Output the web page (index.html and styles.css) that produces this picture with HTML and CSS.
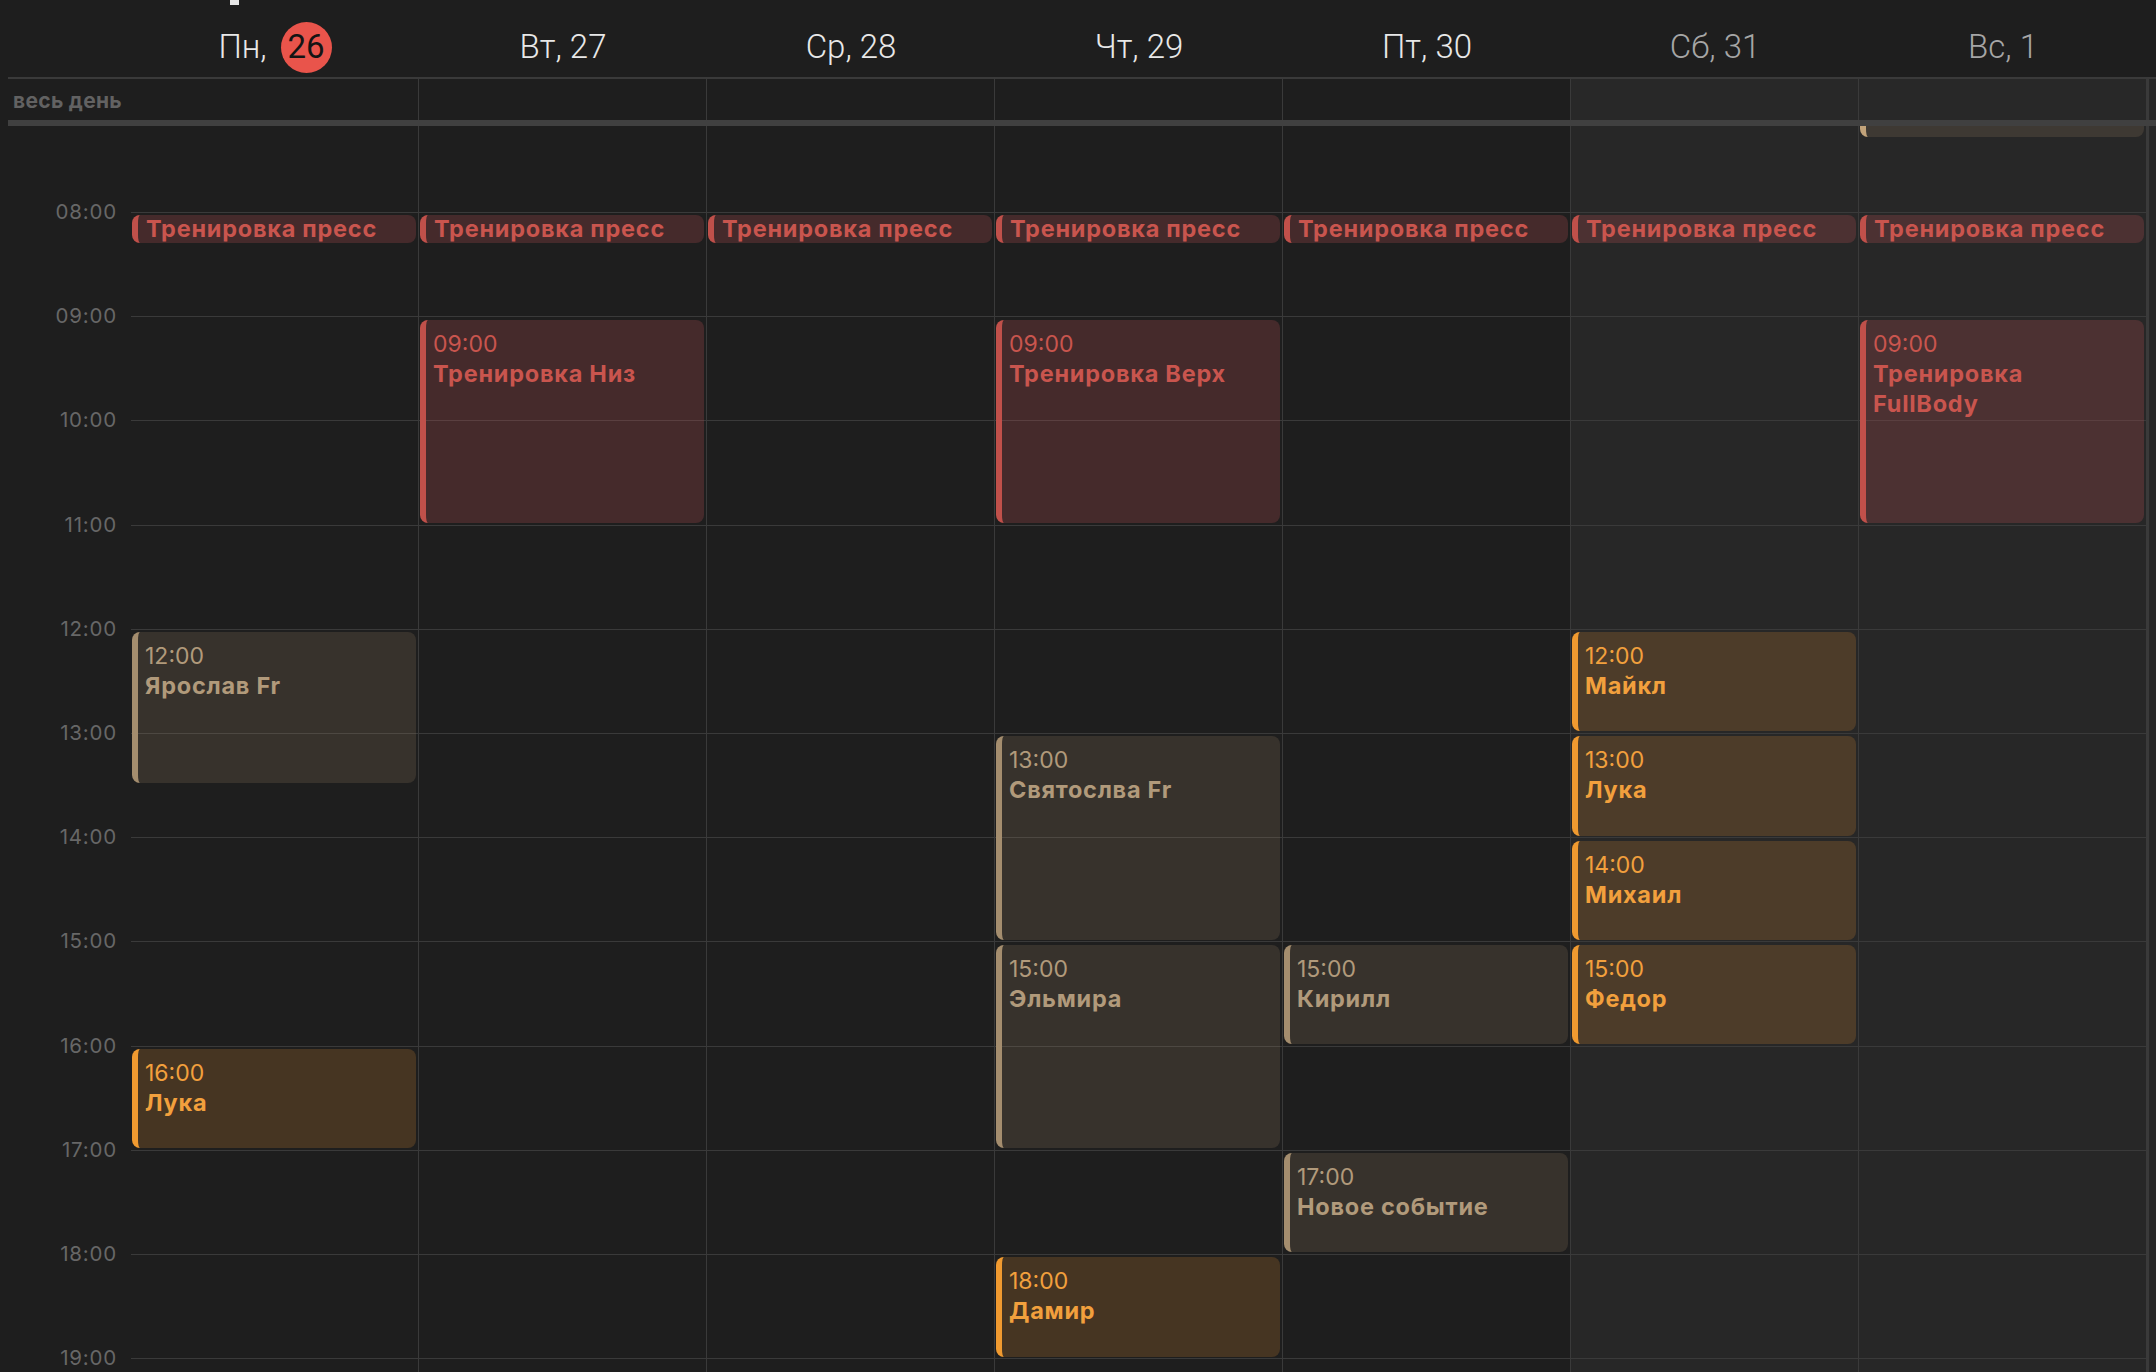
FILE: index.html
```html
<!DOCTYPE html>
<html lang="ru">
<head>
<meta charset="utf-8">
<title>Календарь — неделя</title>
<link rel="stylesheet" href="styles.css">
</head>
<body>
<div class="topmark"></div>
<div class="cal">
  <div class="head">
    <div class="gutter"></div>
    <div class="dh"><span>Пн,</span><span class="today">26</span></div>
    <div class="dh">Вт, 27</div>
    <div class="dh">Ср, 28</div>
    <div class="dh">Чт, 29</div>
    <div class="dh">Пт, 30</div>
    <div class="dh wk">Сб, 31</div>
    <div class="dh wk">Вс, 1</div>
  </div>
  <div class="allday">
    <div class="gutter adlabel">весь день</div>
    <div class="adc"></div>
    <div class="adc"></div>
    <div class="adc"></div>
    <div class="adc"></div>
    <div class="adc"></div>
    <div class="adc wk"></div>
    <div class="adc wk"></div>
    <div class="edge"></div>
  </div>
  <div class="sep"></div>
  <div class="body">
    <div class="grid">
      <div class="times">
        <div></div>
        <div>08:00</div><div>09:00</div><div>10:00</div><div>11:00</div>
        <div>12:00</div><div>13:00</div><div>14:00</div><div>15:00</div>
        <div>16:00</div><div>17:00</div><div>18:00</div><div>19:00</div>
      </div>

      <div class="day">
        <div class="slot"></div><div class="slot"></div><div class="slot"></div><div class="slot"></div><div class="slot"></div><div class="slot"></div><div class="slot"></div><div class="slot"></div><div class="slot"></div><div class="slot"></div><div class="slot"></div><div class="slot"></div><div class="slot"></div>
        <div class="ev pill red" style="top:107.5px">Тренировка пресс</div>
        <div class="ev tan" style="top:524.3px;height:151.3px"><span>12:00</span><b>Ярослав Fr</b></div>
        <div class="ev org" style="top:941.1px;height:99.2px"><span>16:00</span><b>Лука</b></div>
      </div>

      <div class="day">
        <div class="slot"></div><div class="slot"></div><div class="slot"></div><div class="slot"></div><div class="slot"></div><div class="slot"></div><div class="slot"></div><div class="slot"></div><div class="slot"></div><div class="slot"></div><div class="slot"></div><div class="slot"></div><div class="slot"></div>
        <div class="ev pill red" style="top:107.5px">Тренировка пресс</div>
        <div class="ev red" style="top:211.7px;height:203.4px"><span>09:00</span><b>Тренировка Низ</b></div>
      </div>

      <div class="day">
        <div class="slot"></div><div class="slot"></div><div class="slot"></div><div class="slot"></div><div class="slot"></div><div class="slot"></div><div class="slot"></div><div class="slot"></div><div class="slot"></div><div class="slot"></div><div class="slot"></div><div class="slot"></div><div class="slot"></div>
        <div class="ev pill red" style="top:107.5px">Тренировка пресс</div>
      </div>

      <div class="day">
        <div class="slot"></div><div class="slot"></div><div class="slot"></div><div class="slot"></div><div class="slot"></div><div class="slot"></div><div class="slot"></div><div class="slot"></div><div class="slot"></div><div class="slot"></div><div class="slot"></div><div class="slot"></div><div class="slot"></div>
        <div class="ev pill red" style="top:107.5px">Тренировка пресс</div>
        <div class="ev red" style="top:211.7px;height:203.4px"><span>09:00</span><b>Тренировка Верх</b></div>
        <div class="ev tan" style="top:628.5px;height:203.4px"><span>13:00</span><b>Святослва Fr</b></div>
        <div class="ev tan" style="top:836.9px;height:203.4px"><span>15:00</span><b>Эльмира</b></div>
        <div class="ev org" style="top:1149.5px;height:99.2px"><span>18:00</span><b>Дамир</b></div>
      </div>

      <div class="day">
        <div class="slot"></div><div class="slot"></div><div class="slot"></div><div class="slot"></div><div class="slot"></div><div class="slot"></div><div class="slot"></div><div class="slot"></div><div class="slot"></div><div class="slot"></div><div class="slot"></div><div class="slot"></div><div class="slot"></div>
        <div class="ev pill red" style="top:107.5px">Тренировка пресс</div>
        <div class="ev tan" style="top:836.9px;height:99.2px"><span>15:00</span><b>Кирилл</b></div>
        <div class="ev tan" style="top:1045.3px;height:99.2px"><span>17:00</span><b>Новое событие</b></div>
      </div>

      <div class="day wk">
        <div class="slot"></div><div class="slot"></div><div class="slot"></div><div class="slot"></div><div class="slot"></div><div class="slot"></div><div class="slot"></div><div class="slot"></div><div class="slot"></div><div class="slot"></div><div class="slot"></div><div class="slot"></div><div class="slot"></div>
        <div class="ev pill red" style="top:107.5px">Тренировка пресс</div>
        <div class="ev org" style="top:524.3px;height:99.2px"><span>12:00</span><b>Майкл</b></div>
        <div class="ev org" style="top:628.5px;height:99.2px"><span>13:00</span><b>Лука</b></div>
        <div class="ev org" style="top:732.7px;height:99.2px"><span>14:00</span><b>Михаил</b></div>
        <div class="ev org" style="top:836.9px;height:99.2px"><span>15:00</span><b>Федор</b></div>
      </div>

      <div class="day wk">
        <div class="slot"></div><div class="slot"></div><div class="slot"></div><div class="slot"></div><div class="slot"></div><div class="slot"></div><div class="slot"></div><div class="slot"></div><div class="slot"></div><div class="slot"></div><div class="slot"></div><div class="slot"></div><div class="slot"></div>
        <div class="ev tan early" style="top:-70px;height:99.5px"></div>
        <div class="ev pill red" style="top:107.5px">Тренировка пресс</div>
        <div class="ev red" style="top:211.7px;height:203.4px"><span>09:00</span><b>Тренировка FullBody</b></div>
      </div>

      <div class="edge"></div>
    </div>
  </div>
</div>
</body>
</html>
```

FILE: styles.css
```css
* {
  box-sizing: border-box;
  margin: 0;
  padding: 0;
}

html, body {
  background: #1e1e1e;
}

body {
  width: 2156px;
  height: 1372px;
  overflow: hidden;
  position: relative;
  font-family: Inter, "Noto Sans", sans-serif;
}

.topmark {
  position: absolute;
  left: 230px;
  top: 0;
  width: 9px;
  height: 5px;
  background: #e6e6e6;
}

.cal {
  margin-left: 8px;
  width: 2148px;
}

/* header */
.head {
  display: flex;
  height: 79px;
  padding-top: 17px;
  border-bottom: 2px solid #3a3a3a;
}

.gutter {
  width: 123px;
  flex: none;
}

.dh {
  width: 288px;
  flex: none;
  display: flex;
  align-items: center;
  justify-content: center;
  font-family: Roboto, "Noto Sans", sans-serif;
  font-weight: 300;
  font-size: 33px;
  line-height: 40px;
  color: #e8e8e8;
}

.dh.wk {
  color: #a6a6a6;
}

.today {
  display: inline-flex;
  align-items: center;
  justify-content: center;
  width: 51px;
  height: 51px;
  margin-left: 14px;
  border-radius: 50%;
  background: #e9544b;
  color: #141414;
  font-weight: 400;
}

/* all-day row */
.allday {
  display: flex;
  height: 41px;
}

.adlabel {
  padding-left: 5px;
  font-weight: 700;
  font-size: 21px;
  line-height: 43px;
  letter-spacing: 0.3px;
  color: #626262;
  white-space: nowrap;
}

.adc {
  width: 288px;
  flex: none;
  border-right: 1px solid #3a3a3a;
}

.adc.wk {
  background: #282828;
}

.edge {
  width: 9px;
  flex: none;
  border-left: 2px solid #3a3a3a;
  background: #282828;
}

.sep {
  height: 6px;
  background: #404040;
}

/* time grid */
.body {
  height: 1246px;
  overflow: hidden;
}

.grid {
  display: flex;
  margin-top: -18.2px;
}

.times {
  width: 123px;
  flex: none;
  align-self: flex-start;
  margin-top: -12px;
  padding-right: 14px;
  text-align: right;
  font-size: 20.5px;
  line-height: 24px;
  letter-spacing: 0.8px;
  color: #676767;
}

.times div {
  height: 104.2px;
}

.day {
  width: 288px;
  flex: none;
  position: relative;
  border-right: 1px solid #3a3a3a;
}

.day.wk {
  background: #272727;
}

.slot {
  height: 104.2px;
  border-top: 1px solid #3a3a3a;
}

/* events */
.ev {
  position: absolute;
  left: 1px;
  right: 2px;
  border-left: 6px solid;
  border-radius: 8px;
  padding: 9px 14px 0 7px;
  overflow: hidden;
  font-size: 23px;
  line-height: 30px;
}

.ev span {
  display: block;
  font-weight: 400;
}

.ev b {
  display: block;
  font-weight: 700;
  font-size: 23.5px;
  letter-spacing: 0.75px;
}

.pill {
  height: 28px;
  padding: 0 8px;
  line-height: 27px;
  font-size: 23.5px;
  letter-spacing: 0.75px;
  font-weight: 700;
  white-space: nowrap;
}

.red {
  background: rgba(200, 82, 85, 0.23);
  border-color: #c0504a;
  color: #c9554e;
}

.org {
  background: rgba(230, 145, 50, 0.2);
  border-color: #f09a30;
  color: #f2a03d;
}

.tan {
  background: rgba(155, 130, 100, 0.2);
  border-color: #a48d6e;
  color: #b19a7b;
}

.early {
  border-color: #c2a37a;
}
```
